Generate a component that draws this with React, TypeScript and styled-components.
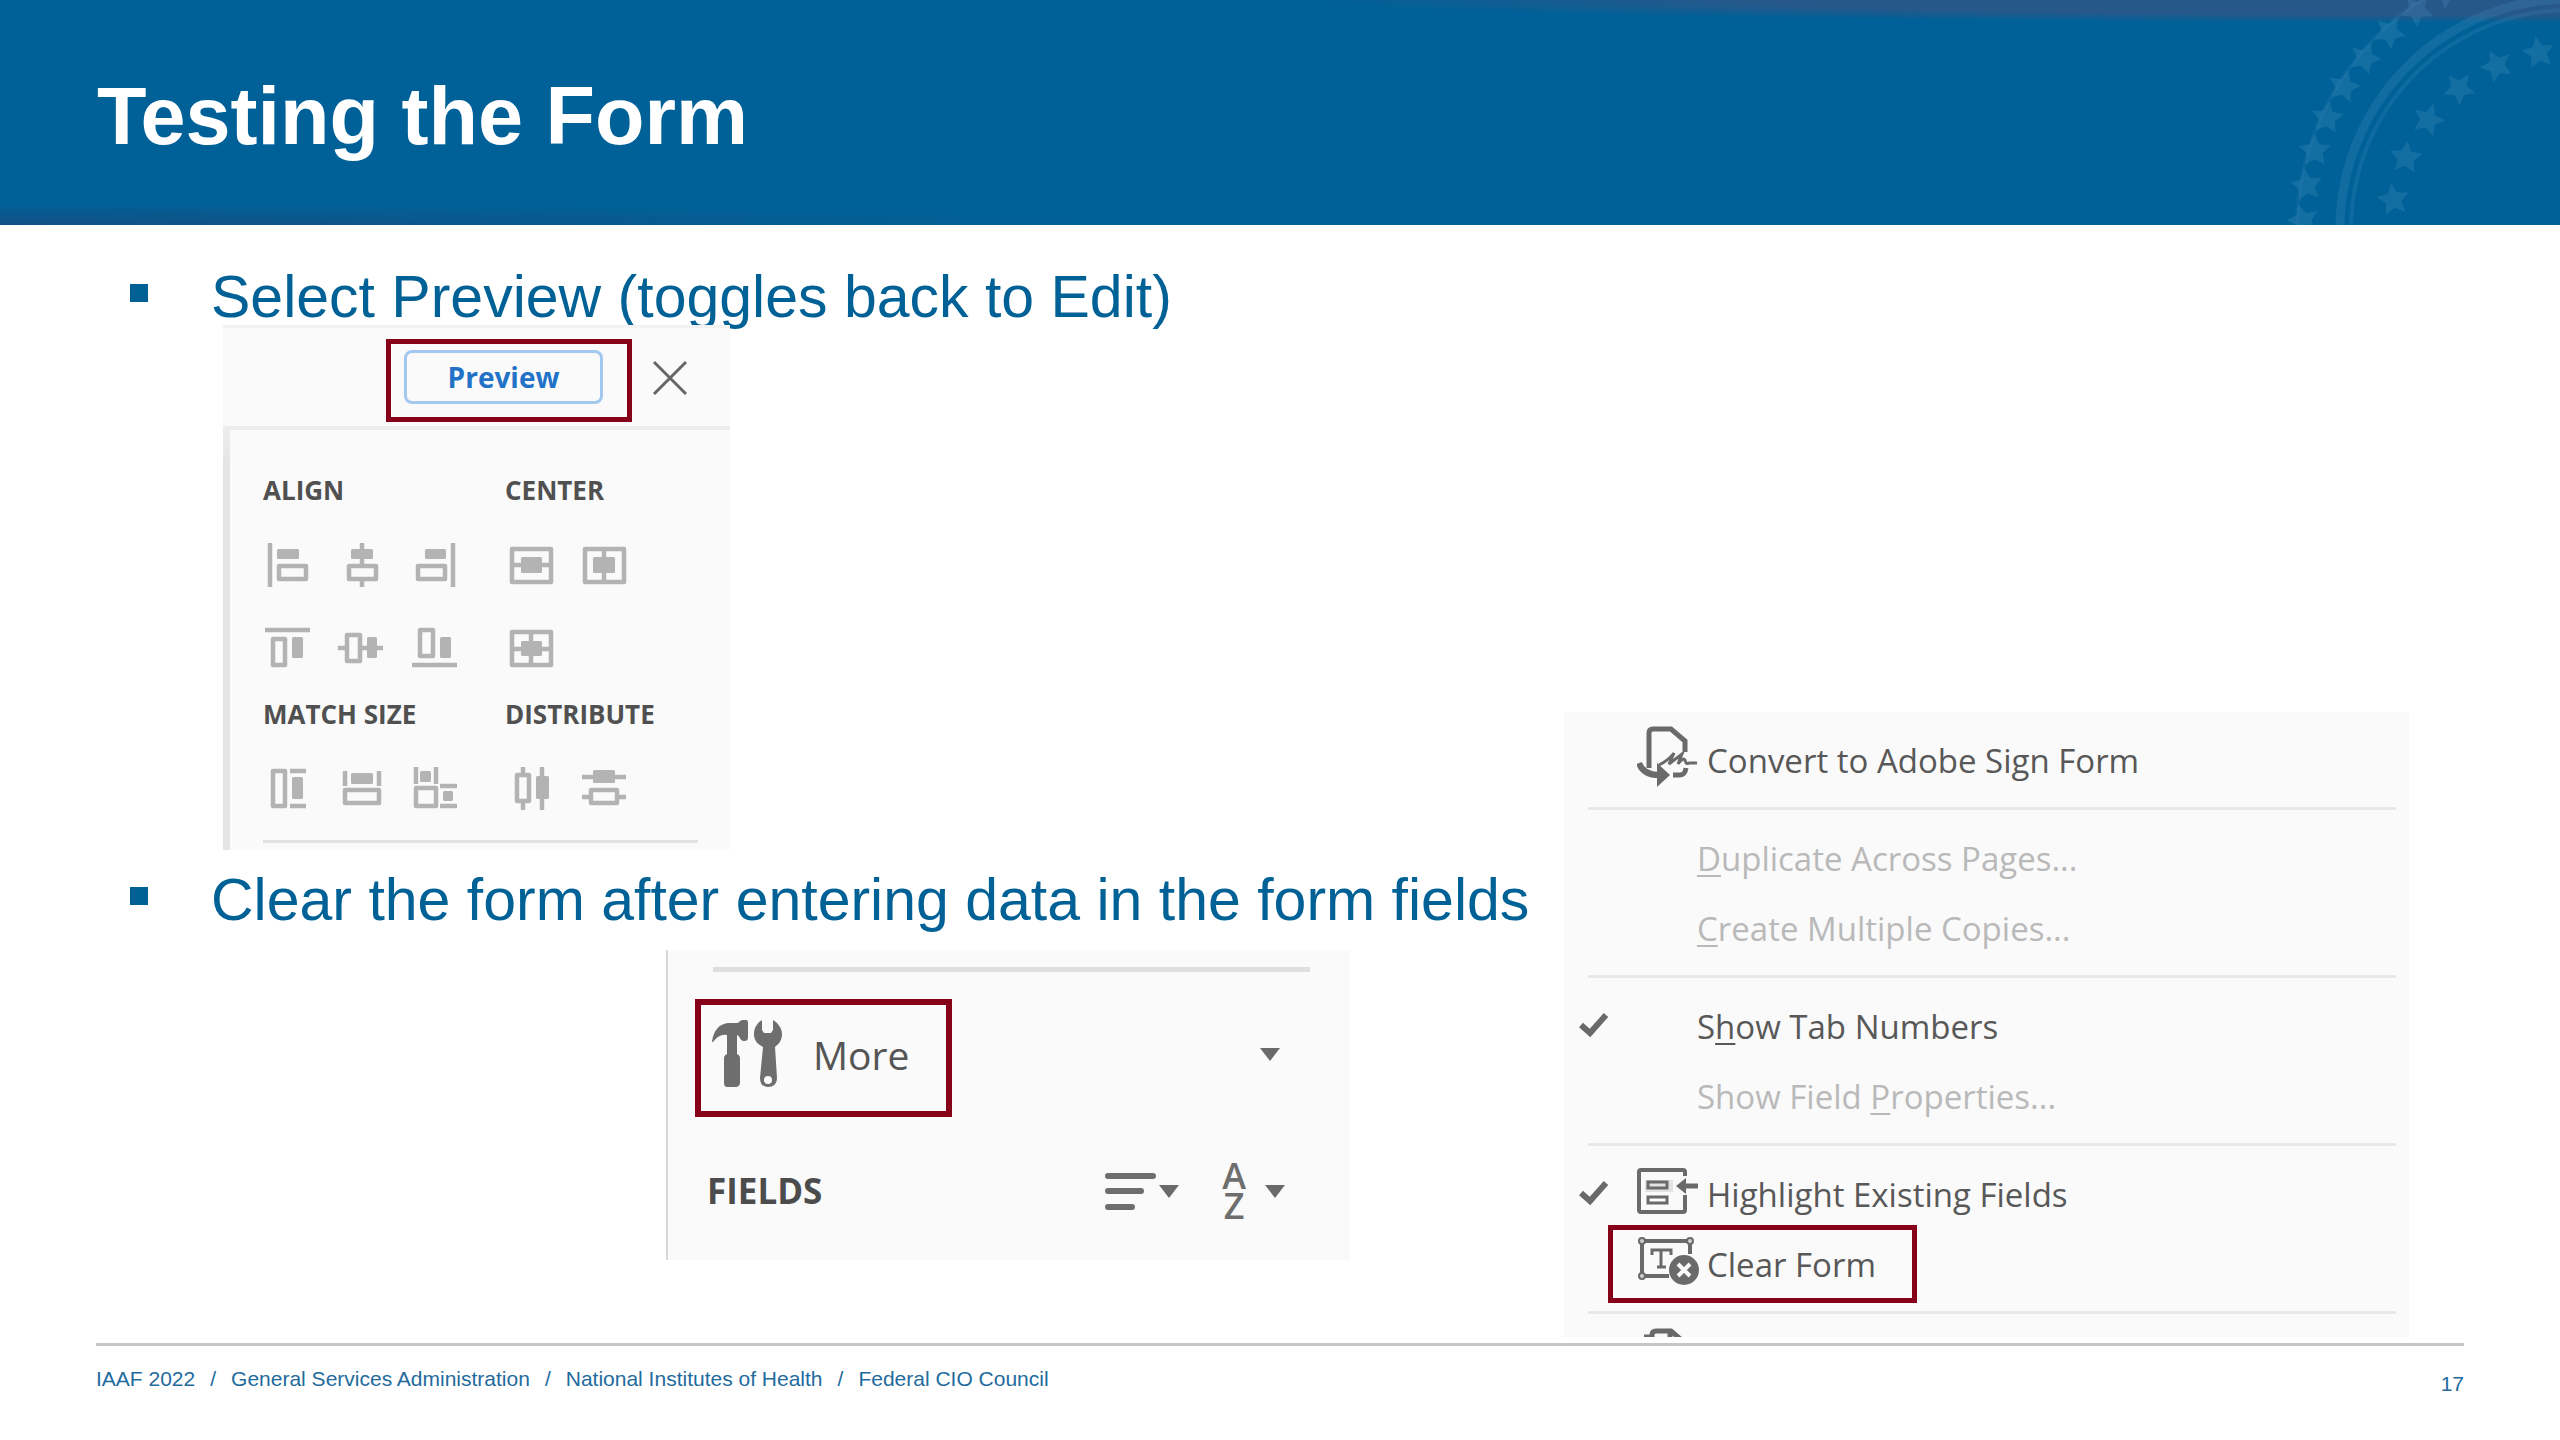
import React from "react";
import styled, { createGlobalStyle } from "styled-components";

const GlobalStyle = createGlobalStyle`
  *, *::before, *::after { box-sizing: border-box; }
  body { margin: 0; background: #fff; font-family: "Liberation Sans", Arial, sans-serif; }
  button { font: inherit; color: inherit; background: none; border: 0; padding: 0; margin: 0; text-align: left; }
`;

const uiFont = `"Open Sans", "Noto Sans", sans-serif`;
const red = "#860019";
const blue = "#006196";

const Slide = styled.div`
  min-height: 100vh;
  display: flex;
  flex-direction: column;
`;

const Header = styled.header`
  height: 225px;
  display: flex;
  justify-content: space-between;
  background:
    radial-gradient(ellipse 1240px 23px at 100% 0, #27588a 0, #27588a 65%, rgba(39, 88, 138, 0) 100%),
    radial-gradient(ellipse 1100px 22px at 0 100%, rgba(22, 76, 128, 0.8), rgba(22, 76, 128, 0)),
    #006198;
`;

const Title = styled.h1`
  margin: 0;
  padding: 71px 0 0 97px;
  color: #fff;
  font-size: 81px;
  line-height: 90px;
  font-weight: 700;
`;

const SealArt = styled.svg`
  display: block;
  width: 280px;
  height: 225px;
`;

const Main = styled.main`
  flex: 1;
  display: flex;
  justify-content: space-between;
  padding: 41px 151px 0 128px;
`;

const Steps = styled.div`
  display: flex;
  flex-direction: column;
  align-items: flex-start;
`;

const Step = styled.h2`
  margin: 0 0 -3px;
  display: flex;
  align-items: flex-start;
  color: ${blue};
  font-size: 59px;
  line-height: 62px;
  font-weight: 400;
  white-space: nowrap;

  &::before {
    content: "";
    width: 18px;
    height: 18px;
    margin: 18px 63px 0 2px;
    background: ${blue};
  }
`;

const AlignPanel = styled.section`
  width: 507px;
  margin: 0 0 19px 95px;
  background: #fafafa;
  border-top: 3px solid #f2f2f2;
  font-family: ${uiFont};
`;

const PanelTop = styled.div`
  height: 98px;
  display: flex;
  align-items: flex-start;
  gap: 20px;
  padding: 11px 0 0 163px;
`;

const PreviewMark = styled.div`
  width: 246px;
  height: 83px;
  padding: 6px 0 0 13px;
  border: 5px solid ${red};
`;

const PreviewButton = styled.button`
  display: block;
  width: 199px;
  height: 54px;
  border: 3px solid #a3c8f0;
  border-radius: 8px;
  color: #2272c8;
  font-size: 28px;
  line-height: 48px;
  font-weight: 700;
  text-align: center;
`;

const CloseButton = styled.button`
  display: block;
  margin-top: 21px;
  line-height: 0;
`;

const PanelBody = styled.div`
  height: 424px;
  padding: 41px 32px 7px 33px;
  border-top: 4px solid #eee;
  border-left: 7px solid #e5e5e5;
  border-image: linear-gradient(#eeeeee, #e5e5e5 8%) 4 0 0 7;
  display: flex;
  flex-direction: column;
  justify-content: space-between;
`;

const Groups = styled.div`
  display: grid;
  grid-template-columns: 242px 1fr;
  row-gap: 23px;
`;

const GroupTitle = styled.h3`
  margin: 0;
  color: #505050;
  font-size: 26px;
  line-height: 38px;
  font-weight: 700;
`;

const IconRow = styled.div<{ $top: number }>`
  display: flex;
  gap: 25px;
  margin: ${(p) => p.$top}px 0 0 2px;
  min-height: 48px;
`;

const ToolButton = styled.button`
  display: block;
  width: 48px;
  height: 48px;
  line-height: 0;
`;

const Rule = styled.hr<{ $h: number; $color: string }>`
  width: 100%;
  height: ${(p) => p.$h}px;
  margin: 0;
  border: 0;
  background: ${(p) => p.$color};
`;

const FieldsPanel = styled.section`
  width: 684px;
  height: 310px;
  margin: 22px 0 0 538px;
  padding: 17px 40px 0 27px;
  background: #fafafa;
  border-left: 2px solid #d8d8d8;
  font-family: ${uiFont};
`;

const FieldsRule = styled.div`
  padding: 0 0 27px 18px;
`;

const MoreRow = styled.div`
  display: flex;
  align-items: flex-start;
  justify-content: space-between;
`;

const MoreButton = styled.button`
  display: flex;
  align-items: flex-start;
  gap: 31px;
  width: 257px;
  height: 118px;
  padding: 15px 0 0 11px;
  border: 6px solid ${red};
  color: #555;
  font-size: 39px;
  line-height: 70px;
`;

const ArrowButton = styled.button`
  display: block;
  margin: 49px 30px 0 0;
  line-height: 0;
`;

const FieldsRow = styled.div`
  display: flex;
  align-items: center;
  justify-content: space-between;
  padding: 43px 25px 0 12px;
`;

const FieldsTitle = styled.h3`
  margin: 0;
  color: #4c4c4c;
  font-size: 35px;
  line-height: 62px;
  font-weight: 700;
`;

const SortTools = styled.div`
  display: flex;
  align-items: center;
  gap: 43px;
`;

const SortButton = styled.button<{ $gap: number }>`
  display: flex;
  align-items: center;
  gap: ${(p) => p.$gap}px;
`;

const Letters = styled.span`
  color: #6e6e6e;
  font-size: 36px;
  line-height: 30px;
  font-weight: 600;
  text-align: center;
`;

const Menu = styled.section`
  align-self: flex-end;
  width: 845px;
  height: 625px;
  overflow: hidden;
  margin-bottom: 6px;
  background: #fafafa;
  font-family: ${uiFont};
`;

const MenuGroup = styled.div`
  margin: 0 13px 0 24px;
  padding: 12px 0 13px;
  border-bottom: 3px solid #e8e8e8;
`;

const MenuItem = styled.button<{ $muted?: boolean }>`
  position: relative;
  display: grid;
  grid-template-columns: 50px 59px 1fr;
  align-items: center;
  width: 100%;
  height: 70px;
  margin-left: -9px;
  color: ${(p) => (p.$muted ? "#b9b9b9" : "#585858")};
  font-size: 33px;
  line-height: 48px;
  white-space: nowrap;

  svg { display: block; }
  u { text-decoration-thickness: 2px; text-underline-offset: 4px; }
`;

const MenuText = styled.span<{ $icon?: boolean }>`
  padding-left: ${(p) => (p.$icon ? 19 : 9)}px;
  padding-top: 3px;
`;

const MenuIcon = styled.span`
  padding: 0 0 5px 8px;
`;

const ClearMark = styled.span`
  position: absolute;
  left: 29px;
  top: -3px;
  width: 309px;
  height: 78px;
  border: 5px solid ${red};
`;

const NextItem = styled.div`
  padding: 14px 0 0 79px;
  line-height: 0;
`;

const Footer = styled.footer`
  margin: 0 96px;
  height: 97px;
  border-top: 3px solid #c6c6c6;
  padding-top: 17px;
  display: flex;
  justify-content: space-between;
  color: #1f6b9d;
  font-size: 21px;
  line-height: 32px;
`;

const Orgs = styled.div`
  display: flex;
  gap: 15px;
`;

const PageNumber = styled.span`
  padding-top: 5px;
`;

const starPoints = (r: number) =>
  Array.from({ length: 10 }, (_, i) => {
    const a = (Math.PI / 5) * i - Math.PI / 2;
    const k = i % 2 ? r * 0.48 : r;
    return `${(Math.cos(a) * k).toFixed(1)},${(Math.sin(a) * k).toFixed(1)}`;
  }).join(" ");

const ringStars = (radius: number, first: number, step: number, count: number) =>
  Array.from({ length: count }, (_, i) => {
    const deg = first + step * i;
    const a = (deg * Math.PI) / 180;
    return { x: 290 - Math.cos(a) * radius, y: 229 - Math.sin(a) * radius, turn: deg - 90 };
  });

function Seal() {
  return (
    <SealArt viewBox="0 0 280 225" aria-hidden="true">
      <g fill="none" stroke="#4f97c4">
        <circle cx="290" cy="229" r="230" strokeWidth="9" opacity="0.22" />
        <circle cx="290" cy="229" r="219" strokeWidth="4" opacity="0.18" />
        <circle cx="290" cy="229" r="273" strokeWidth="4" opacity="0.12" />
      </g>
      <g fill="#4f97c4" opacity="0.24">
        {[...ringStars(267, 1.8, 7.6, 10), ...ringStars(179, 9.4, 14.1, 6)].map((s, i) => (
          <polygon key={i} points={starPoints(17)} transform={`translate(${s.x} ${s.y}) rotate(${s.turn})`} />
        ))}
      </g>
    </SealArt>
  );
}

type Box = [number, number, number, number];
type Shape = { lines?: Box[]; fills?: Box[]; frames?: Box[]; frameFirst?: boolean };

const shapes: Record<string, Shape> = {
  "Align left": { lines: [[5, 2, 5, 46]], fills: [[12, 8, 22, 10]], frames: [[14, 25, 27, 13]] },
  "Align vertical centers": { lines: [[24, 2, 24, 46]], fills: [[13, 8, 22, 10]], frames: [[11, 25, 27, 13]] },
  "Align right": { lines: [[42, 2, 42, 46]], fills: [[14, 8, 21, 10]], frames: [[7, 25, 27, 13]] },
  "Align top": { lines: [[0, 6, 45, 6]], fills: [[27, 13, 11, 21]], frames: [[8, 15, 12, 26]] },
  "Align middle": { lines: [[0, 24, 45, 24]], fills: [[29, 13, 10, 21]], frames: [[9, 11, 13, 26]] },
  "Align bottom": { lines: [[1, 41, 46, 41]], fills: [[29, 13, 11, 21]], frames: [[9, 6, 13, 26]] },
  "Center vertically": { lines: [[4, 24, 44, 24]], fills: [[14, 16, 21, 16]], frames: [[5, 8, 39, 33]], frameFirst: true },
  "Center horizontally": { lines: [[24, 8, 24, 41]], fills: [[13, 16, 22, 16]], frames: [[5, 8, 39, 33]], frameFirst: true },
  "Center both": { lines: [[4, 25, 44, 25], [24, 8, 24, 41]], fills: [[14, 17, 21, 15]], frames: [[5, 8, 39, 33]], frameFirst: true },
  "Match height": { lines: [[25, 7, 41, 7], [25, 42, 41, 42]], fills: [[27, 13, 11, 22]], frames: [[8, 7, 12, 35]] },
  "Match width": { lines: [[7, 7, 7, 22], [41, 7, 41, 22]], fills: [[13, 9, 22, 11]], frames: [[7, 26, 34, 13]] },
  "Match both": {
    lines: [[5, 3, 5, 20], [25, 3, 25, 20], [29, 22, 46, 22], [29, 42, 46, 42]],
    fills: [[9, 7, 11, 11], [32, 27, 10, 10]],
    frames: [[5, 24, 20, 18]],
  },
  "Distribute horizontally": { lines: [[16, 3, 16, 46], [35, 3, 35, 46]], fills: [[29, 12, 13, 23]], frames: [[10, 11, 12, 26]] },
  "Distribute vertically": { lines: [[2, 13, 46, 13], [2, 33, 46, 33]], fills: [[13, 6, 22, 13]], frames: [[11, 26, 26, 13]] },
};

function Tool({ name }: { name: string }) {
  const s = shapes[name];
  const frames = s.frames?.map(([x, y, w, h], i) => (
    <rect key={`f${i}`} x={x} y={y} width={w} height={h} fill="#fafafa" stroke="#b3b3b3" strokeWidth="4.5" strokeLinejoin="round" />
  ));
  return (
    <ToolButton type="button" aria-label={name}>
      <svg width="48" height="48" viewBox="0 0 48 48" overflow="visible">
        {s.frameFirst && frames}
        {s.lines?.map(([a, b, c, d], i) => (
          <line key={i} x1={a} y1={b} x2={c} y2={d} stroke="#b3b3b3" strokeWidth="4.5" strokeLinecap="butt" />
        ))}
        {!s.frameFirst && frames}
        {s.fills?.map(([x, y, w, h], i) => (
          <rect key={i} x={x} y={y} width={w} height={h} rx="1.5" fill="#b3b3b3" />
        ))}
      </svg>
    </ToolButton>
  );
}

const groups = [
  {
    title: "ALIGN",
    rows: [
      { top: 32, tools: ["Align left", "Align vertical centers", "Align right"] },
      { top: 35, tools: ["Align top", "Align middle", "Align bottom"] },
    ],
  },
  {
    title: "CENTER",
    rows: [
      { top: 32, tools: ["Center vertically", "Center horizontally"] },
      { top: 35, tools: ["Center both"] },
    ],
  },
  { title: "MATCH SIZE", rows: [{ top: 31, tools: ["Match height", "Match width", "Match both"] }] },
  { title: "DISTRIBUTE", rows: [{ top: 31, tools: ["Distribute horizontally", "Distribute vertically"] }] },
];

const Caret = () => (
  <svg width="20" height="13" viewBox="0 0 20 13">
    <path d="M0 0H20L10 13Z" fill="#6a6a6a" />
  </svg>
);

const Check = () => (
  <svg width="30" height="24" viewBox="0 0 30 24">
    <path d="M2 12L11 20L27 2" fill="none" stroke="#6a6a6a" strokeWidth="6" />
  </svg>
);

const HammerWrench = () => (
  <svg width="70" height="67" viewBox="0 0 70 67" fill="#6e6e6e">
    <path d="M0 22C1 11 7 3 18 3H25C28 3 27 0 31 0H34C36 0 36 2 36 4V17C36 20 35 21 32 21C28 21 28 16 25 15V34C27 35 28 36 28 39V62C28 66 26 67 23 67H16C13 67 12 66 12 62V39C12 36 13 35 15 34V15C9 14 5 17 1 22Z" />
    <path fillRule="evenodd" d="M50 0V10L52 13H59L61 10V0C66 3 70 8 70 14C70 20 67 24 63 27L65 58C65 64 61 67 56 67C51 67 48 64 48 58L51 27C45 24 42 20 42 14C42 8 45 3 50 0ZM56 56A4 4 0 1 0 56 64A4 4 0 1 0 56 56Z" />
  </svg>
);

const ListLines = () => (
  <svg width="51" height="37" viewBox="0 0 51 37" stroke="#6e6e6e" strokeWidth="6" strokeLinecap="round">
    <path d="M3 3H48M3 18H36M3 34H27" />
  </svg>
);

const SignIcon = () => (
  <svg width="61" height="62" viewBox="0 0 61 62" fill="none" stroke="#6a6a6a" strokeWidth="5">
    <path d="M12 42V7Q12 3 16 3H34L48 15V26" />
    <path d="M2 37Q6 49 22 49" strokeWidth="6" />
    <path d="M20 37L33 49L20 61Z" fill="#6a6a6a" stroke="none" />
    <path d="M36 49H43Q48 49 49 42" />
    <path d="M22 39Q32 34 37 27L32 38L45 28L41 38Q46 31 48 34Q49 39 52 37H60" strokeWidth="3" />
  </svg>
);

const HighlightIcon = () => (
  <svg width="62" height="46" viewBox="0 0 62 46" fill="none" stroke="#6a6a6a" strokeWidth="4">
    <path d="M8 12H36V24H8Z" fill="#e2e2e2" stroke="none" />
    <path d="M48 8V4Q48 2 46 2H4Q2 2 2 4V42Q2 44 4 44H46Q48 44 48 42V27" />
    <path d="M11 14H30V20H11ZM11 29H30V35H11Z" strokeWidth="3" />
    <path d="M39 18L49 10V26Z" fill="#6a6a6a" stroke="none" />
    <path d="M46 18H61" strokeWidth="5" />
  </svg>
);

const ClearIcon = () => (
  <svg width="62" height="50" viewBox="0 0 62 50" fill="none" stroke="#6a6a6a" strokeWidth="4">
    <path d="M5 5H53V18M5 5V40H32" />
    <g fill="#d0d0d0" strokeWidth="2">
      <circle cx="5" cy="5" r="3" />
      <circle cx="53" cy="5" r="3" />
      <circle cx="5" cy="40" r="3" />
    </g>
    <path d="M15 19V14H34V19M24 14V31M20 31H29" strokeWidth="3" />
    <circle cx="47" cy="34" r="15" fill="#6a6a6a" stroke="none" />
    <path d="M41 28L53 40M53 28L41 40" stroke="#fafafa" />
  </svg>
);

const NextIcon = () => (
  <svg width="44" height="40" viewBox="0 0 44 40" fill="none" stroke="#6a6a6a" strokeWidth="5">
    <path d="M9 40V7Q9 3 13 3H28L42 15V40" />
    <path d="M1 9H9M27 3V12H38" />
  </svg>
);

export default function App() {
  return (
    <>
      <GlobalStyle />
      <Slide>
        <Header>
          <Title>Testing the Form</Title>
          <Seal />
        </Header>
        <Main>
          <Steps>
            <Step>Select Preview (toggles back to Edit)</Step>
            <AlignPanel>
              <PanelTop>
                <PreviewMark>
                  <PreviewButton type="button">Preview</PreviewButton>
                </PreviewMark>
                <CloseButton type="button" aria-label="Close">
                  <svg width="36" height="36" viewBox="0 0 36 36" stroke="#666" strokeWidth="3">
                    <path d="M2 2L34 34M34 2L2 34" />
                  </svg>
                </CloseButton>
              </PanelTop>
              <PanelBody>
                <Groups>
                  {groups.map((group) => (
                    <div key={group.title}>
                      <GroupTitle>{group.title}</GroupTitle>
                      {group.rows.map((row) => (
                        <IconRow key={row.tools[0]} $top={row.top}>
                          {row.tools.map((name) => (
                            <Tool key={name} name={name} />
                          ))}
                        </IconRow>
                      ))}
                    </div>
                  ))}
                </Groups>
                <Rule $h={3} $color="#e2e2e2" />
              </PanelBody>
            </AlignPanel>
            <Step>Clear the form after entering data in the form fields</Step>
            <FieldsPanel>
              <FieldsRule>
                <Rule $h={5} $color="#dfdfdf" />
              </FieldsRule>
              <MoreRow>
                <MoreButton type="button">
                  <HammerWrench />
                  More
                </MoreButton>
                <ArrowButton type="button" aria-label="Open more tools">
                  <Caret />
                </ArrowButton>
              </MoreRow>
              <FieldsRow>
                <FieldsTitle>FIELDS</FieldsTitle>
                <SortTools>
                  <SortButton type="button" $gap={3} aria-label="Order fields">
                    <ListLines />
                    <Caret />
                  </SortButton>
                  <SortButton type="button" $gap={19}>
                    <Letters>
                      A<br />Z
                    </Letters>
                    <Caret />
                  </SortButton>
                </SortTools>
              </FieldsRow>
            </FieldsPanel>
          </Steps>
          <Menu>
            <MenuGroup>
              <MenuItem type="button">
                <span />
                <MenuIcon><SignIcon /></MenuIcon>
                <MenuText $icon>Convert to Adobe Sign Form</MenuText>
              </MenuItem>
            </MenuGroup>
            <MenuGroup>
              <MenuItem type="button" $muted>
                <span /><span />
                <MenuText><u>D</u>uplicate Across Pages...</MenuText>
              </MenuItem>
              <MenuItem type="button" $muted>
                <span /><span />
                <MenuText><u>C</u>reate Multiple Copies...</MenuText>
              </MenuItem>
            </MenuGroup>
            <MenuGroup>
              <MenuItem type="button">
                <Check /><span />
                <MenuText>S<u>h</u>ow Tab Numbers</MenuText>
              </MenuItem>
              <MenuItem type="button" $muted>
                <span /><span />
                <MenuText>Show Field <u>P</u>roperties...</MenuText>
              </MenuItem>
            </MenuGroup>
            <MenuGroup>
              <MenuItem type="button">
                <Check />
                <MenuIcon><HighlightIcon /></MenuIcon>
                <MenuText $icon>Highlight Existing Fields</MenuText>
              </MenuItem>
              <MenuItem type="button">
                <span />
                <MenuIcon><ClearIcon /></MenuIcon>
                <MenuText $icon>Clear Form</MenuText>
                <ClearMark />
              </MenuItem>
            </MenuGroup>
            <NextItem><NextIcon /></NextItem>
          </Menu>
        </Main>
        <Footer>
          <Orgs>
            <span>IAAF 2022</span>
            <span>/</span>
            <span>General Services Administration</span>
            <span>/</span>
            <span>National Institutes of Health</span>
            <span>/</span>
            <span>Federal CIO Council</span>
          </Orgs>
          <PageNumber>17</PageNumber>
        </Footer>
      </Slide>
    </>
  );
}
